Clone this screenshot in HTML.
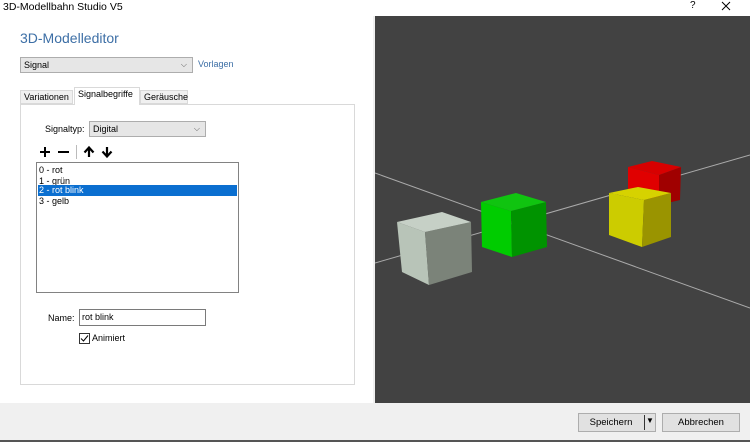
<!DOCTYPE html>
<html><head><style>
*{margin:0;padding:0;box-sizing:border-box}
body{width:750px;height:442px;overflow:hidden;background:#fff;font-family:"Liberation Sans",sans-serif;font-size:9px;color:#000;position:relative}
.a{position:absolute}
.dd{position:absolute;background:#e6e6e6;border:1px solid #adadad;padding-left:3px;line-height:14px}
.dd span{position:absolute;right:5px;top:0;color:#555;font-size:8px}
.tab{position:absolute;top:90px;height:14px;border:1px solid #d9d9d9;background:#f0f0f0;padding:0 3px;line-height:12px}
.btn{position:absolute;top:413px;height:19px;background:#e1e1e1;border:1px solid #adadad;text-align:center;line-height:17px;font-size:9.5px}
</style></head><body>
<div class="a" style="left:3px;top:1px;font-size:10.5px">3D-Modellbahn Studio V5</div>
<div class="a" style="left:690px;top:0px;font-size:10px">?</div>
<svg class="a" style="left:720px;top:1px" width="12" height="12"><path d="M2 1L10 9M10 1L2 9" stroke="#000" stroke-width="1"/></svg>
<div class="a" style="left:20px;top:30px;font-size:14px;color:#3d6fa6">3D-Modelleditor</div>
<div class="dd" style="left:20px;top:57px;width:173px;height:16px">Signal<span>⌵</span></div>
<div class="a" style="left:198px;top:59px;color:#3d6fa6">Vorlagen</div>
<div class="tab" style="left:20px;width:53px">Variationen</div>
<div class="tab" style="left:140px;width:48px">Geräusche</div>
<div class="a" style="left:20px;top:104px;width:335px;height:281px;border:1px solid #d9d9d9;background:#fff"></div>
<div class="tab" style="left:74px;top:87px;height:18px;width:66px;background:#fff;border-bottom:none">Signalbegriffe</div>
<div class="a" style="left:45px;top:124px">Signaltyp:</div>
<div class="dd" style="left:89px;top:121px;width:117px;height:16px">Digital<span>⌵</span></div>
<svg class="a" style="left:38px;top:145px" width="80" height="14">
<path d="M2 7H12M7 2V12" stroke="#000" stroke-width="2"/>
<path d="M20 7H31" stroke="#000" stroke-width="2"/>
<path d="M51 12V3M46.5 7.5L51 2.5L55.5 7.5" stroke="#000" stroke-width="2.2" fill="none"/>
<path d="M69 2V11M64.5 6.5L69 11.5L73.5 6.5" stroke="#000" stroke-width="2.2" fill="none"/>
</svg>
<div class="a" style="left:76px;top:145px;width:1px;height:14px;background:#bbb"></div>
<div class="a" style="left:36px;top:162px;width:203px;height:131px;border:1px solid #828282;background:#fff"></div>
<div class="a" style="left:39px;top:165px;line-height:10.5px">0 - rot<br>1 - grün</div>
<div class="a" style="left:38px;top:185px;width:199px;height:11px;background:#0b6fd0;color:#fff;padding-left:1px;line-height:11px">2 - rot blink</div>
<div class="a" style="left:39px;top:196px;line-height:10.5px">3 - gelb</div>
<div class="a" style="left:48px;top:313px">Name:</div>
<div class="a" style="left:79px;top:309px;width:127px;height:17px;border:1px solid #7a7a7a;padding-left:2px;line-height:15px">rot blink</div>
<div class="a" style="left:79px;top:333px;width:11px;height:11px;border:1px solid #333"></div>
<svg class="a" style="left:79px;top:333px" width="11" height="11"><path d="M2 5.5L4.5 8L9 2.5" stroke="#000" fill="none" stroke-width="1"/></svg>
<div class="a" style="left:92px;top:333px">Animiert</div>
<div class="a" style="left:373px;top:16px;width:2px;height:387px;background:#f0f0f0"></div>
<svg class="a" style="left:375px;top:16px" width="375" height="387" viewBox="375 16 375 387">
<rect x="375" y="16" width="375" height="387" fill="#424242"/>
<g stroke="#aaa" stroke-width="1">
<line x1="375" y1="173" x2="750" y2="308"/>
<line x1="375" y1="263" x2="750" y2="155"/>
</g>
<polygon points="397,222 425,232 429,285 402,272" fill="#b8c4b8"/>
<polygon points="425,232 471,222 472,272 429,285" fill="#7b8379"/>
<polygon points="397,222 442,212 471,222 425,232" fill="#c6d0c6"/>
<polygon points="481,202 511,211 512,257 482,247" fill="#00cc00"/>
<polygon points="511,211 546,202 547,247 512,257" fill="#009300"/>
<polygon points="481,202 516,193 546,202 511,211" fill="#10c410"/>
<polygon points="628,167 659,175 659,200 628,195" fill="#e00000"/>
<polygon points="659,175 681,167 680,200 659,205" fill="#a00000"/>
<polygon points="628,167 652,161 681,167 659,175" fill="#d80000"/>
<polygon points="609,193 644,200 642,247 609,235" fill="#cccc00"/>
<polygon points="644,200 671,193 671,237 642,247" fill="#9a9400"/>
<polygon points="609,193 638,187 671,193 644,200" fill="#d6d200"/>
</svg>
<div class="a" style="left:0;top:403px;width:750px;height:37px;background:#f0f0f0"></div>
<div class="btn" style="left:578px;width:78px;padding-right:12px">Speichern</div>
<div class="a" style="left:644px;top:415px;width:1px;height:15px;background:#333"></div>
<div class="a" style="left:646px;top:416px;font-size:8px">▼</div>
<div class="btn" style="left:662px;width:78px">Abbrechen</div>
<div class="a" style="left:0;top:440px;width:750px;height:2px;background:#555"></div>
</body></html>
